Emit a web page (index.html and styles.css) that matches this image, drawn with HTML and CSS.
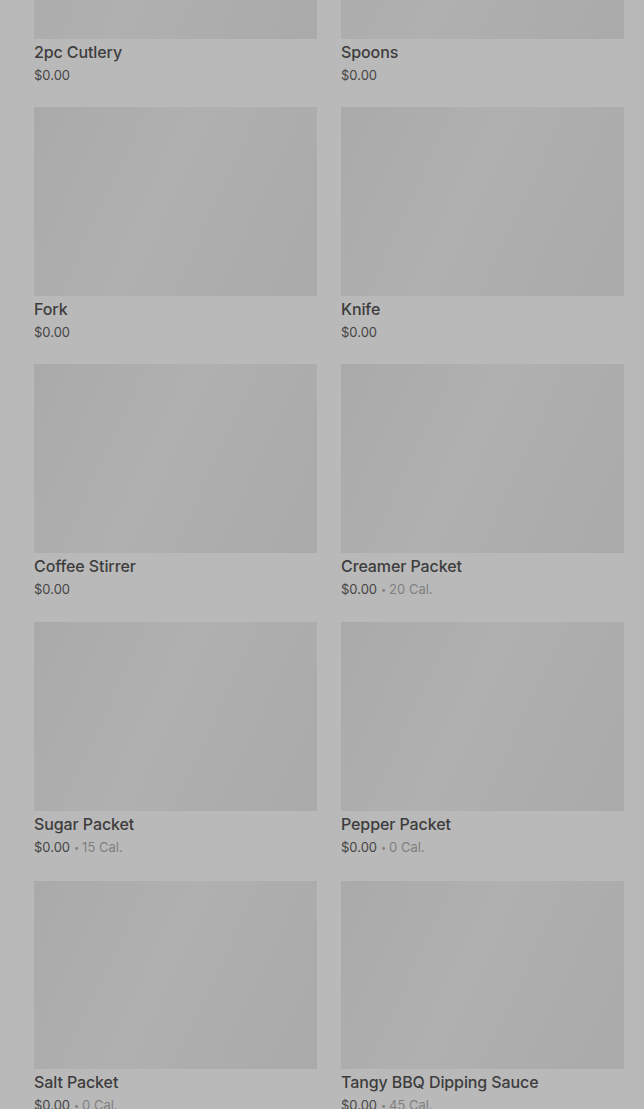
FILE: index.html
```html
<!DOCTYPE html>
<html lang="en">
<head>
  <meta charset="UTF-8" />
  <meta name="viewport" content="width=device-width, initial-scale=1.0"/>
  <title>Utensils & Condiments</title>
  <link rel="stylesheet" href="styles.css">
</head>
<body>
  <div class="menu">
    <div class="item">
      <div class="thumb"></div>
      <div class="name">2pc Cutlery</div>
      <div class="meta">$0.00</div>
    </div>
    <div class="item">
      <div class="thumb"></div>
      <div class="name">Spoons</div>
      <div class="meta">$0.00</div>
    </div>
    <div class="item">
      <div class="thumb"></div>
      <div class="name">Fork</div>
      <div class="meta">$0.00</div>
    </div>
    <div class="item">
      <div class="thumb"></div>
      <div class="name">Knife</div>
      <div class="meta">$0.00</div>
    </div>
    <div class="item">
      <div class="thumb"></div>
      <div class="name">Coffee Stirrer</div>
      <div class="meta">$0.00</div>
    </div>
    <div class="item">
      <div class="thumb"></div>
      <div class="name">Creamer Packet</div>
      <div class="meta">$0.00<span class="cal"><span class="dot">•</span>20 Cal.</span></div>
    </div>
    <div class="item">
      <div class="thumb"></div>
      <div class="name">Sugar Packet</div>
      <div class="meta">$0.00<span class="cal"><span class="dot">•</span>15 Cal.</span></div>
    </div>
    <div class="item">
      <div class="thumb"></div>
      <div class="name">Pepper Packet</div>
      <div class="meta">$0.00<span class="cal"><span class="dot">•</span>0 Cal.</span></div>
    </div>
    <div class="item">
      <div class="thumb"></div>
      <div class="name">Salt Packet</div>
      <div class="meta">$0.00<span class="cal"><span class="dot">•</span>0 Cal.</span></div>
    </div>
    <div class="item">
      <div class="thumb"></div>
      <div class="name">Tangy BBQ Dipping Sauce</div>
      <div class="meta">$0.00<span class="cal"><span class="dot">•</span>45 Cal.</span></div>
    </div>
  </div>
</body>
</html>
```

FILE: styles.css
```css
* {
  box-sizing: border-box;
  font-family: Inter, "Noto Sans", sans-serif;
}
html, body {
  margin: 0;
  padding: 0;
  background: #b9b9b9;
  overflow: hidden;
  height: 1109px;
}
.menu {
  display: grid;
  grid-template-columns: 283px 283px;
  column-gap: 24px;
  row-gap: 22.5px;
  padding: 0 20px 0 34px;
  margin-top: -150px;
}
.thumb {
  aspect-ratio: 3 / 2;
  background: linear-gradient(115deg, #aaaaaa 0%, #b0b0b0 45%, #adadad 70%, #aaaaaa 100%);
}
.name {
  margin-top: 3px;
  font-size: 16px;
  line-height: 20px;
  font-weight: 500;
  color: #3d3d3d;
  letter-spacing: -0.1px;
}
.meta {
  margin-top: 3px;
  font-size: 13px;
  line-height: 20px;
  color: #454545;
}
.cal { color: #808080; }
.dot { font-size: 9px; margin: 0 3px 0 4px; vertical-align: 1px; }
```
